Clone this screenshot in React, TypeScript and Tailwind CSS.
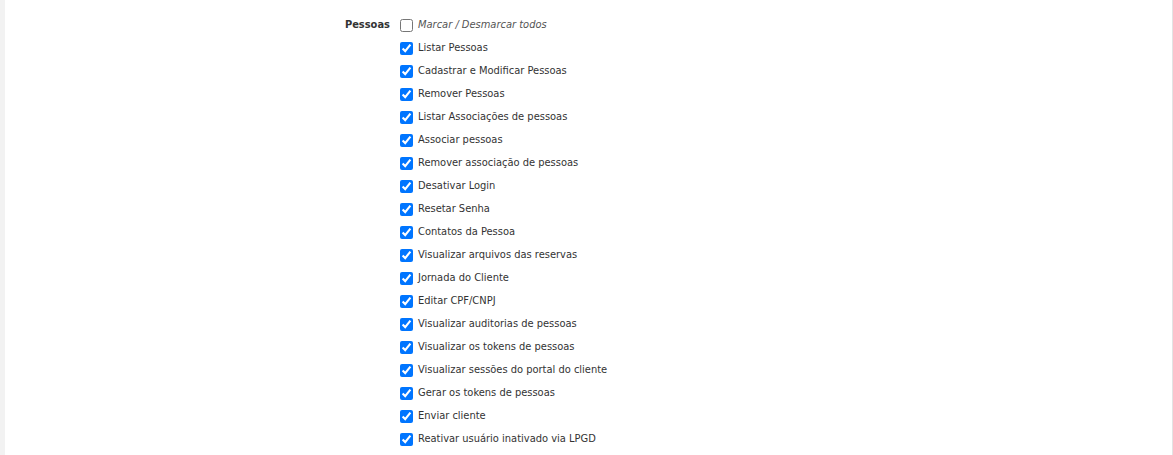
const items = [
  "Listar Pessoas",
  "Cadastrar e Modificar Pessoas",
  "Remover Pessoas",
  "Listar Associações de pessoas",
  "Associar pessoas",
  "Remover associação de pessoas",
  "Desativar Login",
  "Resetar Senha",
  "Contatos da Pessoa",
  "Visualizar arquivos das reservas",
  "Jornada do Cliente",
  "Editar CPF/CNPJ",
  "Visualizar auditorias de pessoas",
  "Visualizar os tokens de pessoas",
  "Visualizar sessões do portal do cliente",
  "Gerar os tokens de pessoas",
  "Enviar cliente",
  "Reativar usuário inativado via LPGD",
];

export default function App() {
  return (
    <div className="flex w-[1173px] h-[455px] bg-[#f2f2f2] overflow-hidden" style={{ fontFamily: '"DejaVu Sans Condensed", "DejaVu Sans", Verdana, sans-serif' }}>
      <div className="ml-[5px] flex-1 bg-white border-r border-[#e3e3e3] pt-[14px]">
        <div className="flex">
          <div className="w-[385px] shrink-0 text-right text-[11px] font-bold text-[#333] leading-[20px] pt-px">Pessoas</div>
          <div className="ml-[10px] flex flex-col">
            <label className="flex items-center h-[23px] gap-[5px] text-[11px] text-[#555] italic">
              <input type="checkbox" className="m-0 w-[13px] h-[13px]" />
              <span>Marcar / Desmarcar todos</span>
            </label>
            {items.map((label) => (
              <label key={label} className="flex items-center h-[23px] gap-[5px] text-[11px] text-[#333]">
                <input type="checkbox" defaultChecked className="m-0 w-[13px] h-[13px]" />
                <span>{label}</span>
              </label>
            ))}
          </div>
        </div>
      </div>
    </div>
  );
}
